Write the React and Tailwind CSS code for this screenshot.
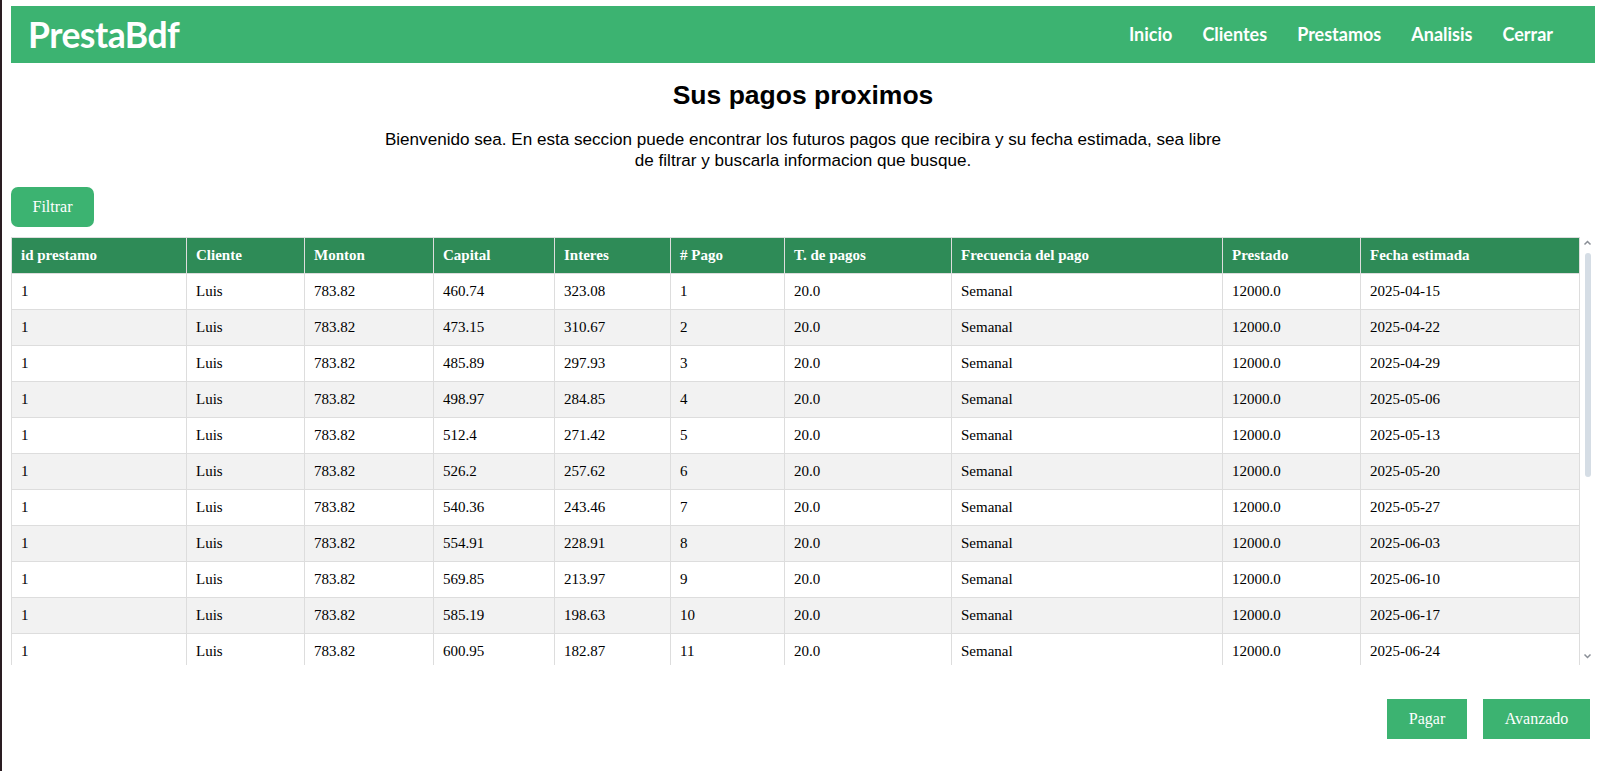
const rows = [
    ["460.74", "323.08", "2025-04-15"],
    ["473.15", "310.67", "2025-04-22"],
    ["485.89", "297.93", "2025-04-29"],
    ["498.97", "284.85", "2025-05-06"],
    ["512.4", "271.42", "2025-05-13"],
    ["526.2", "257.62", "2025-05-20"],
    ["540.36", "243.46", "2025-05-27"],
    ["554.91", "228.91", "2025-06-03"],
    ["569.85", "213.97", "2025-06-10"],
    ["585.19", "198.63", "2025-06-17"],
    ["600.95", "182.87", "2025-06-24"],
    ["617.13", "166.69", "2025-07-01"],
    ["633.74", "150.08", "2025-07-08"],
    ["650.81", "133.01", "2025-07-15"],
    ["668.33", "115.49", "2025-07-22"],
    ["686.32", "97.5", "2025-07-29"],
    ["704.8", "79.02", "2025-08-05"],
    ["723.77", "60.05", "2025-08-12"],
    ["743.26", "40.56", "2025-08-19"],
    ["763.27", "20.55", "2025-08-26"]
];

const columns = [
    { label: "id prestamo", w: "w-[175px]" },
    { label: "Cliente", w: "w-[118px]" },
    { label: "Monton", w: "w-[129px]" },
    { label: "Capital", w: "w-[121px]" },
    { label: "Interes", w: "w-[116px]" },
    { label: "# Pago", w: "w-[114px]" },
    { label: "T. de pagos", w: "w-[167px]" },
    { label: "Frecuencia del pago", w: "w-[271px]" },
    { label: "Prestado", w: "w-[138px]" },
    { label: "Fecha estimada", w: "" }
];

const navLinks = ["Inicio", "Clientes", "Prestamos", "Analisis", "Cerrar"];

const Chevron = ({ up }) => (
    <svg width="9" height="6" viewBox="0 0 9 6" className="text-[#8a8f96]">
        <polyline
            points={up ? "1.5,4.5 4.5,1.5 7.5,4.5" : "1.5,1.5 4.5,4.5 7.5,1.5"}
            fill="none"
            stroke="currentColor"
            strokeWidth="1.5"
        />
    </svg>
);

const App = () => {
    return (
        <div className="min-h-screen bg-white flex">
            <div className="w-[2px] bg-[#2a1d22]"></div>
            <div className="flex-1 pl-[9px] pr-[5px] pt-[6px]">
                {/* Navbar */}
                <nav className="h-[57px] bg-[#3cb371] flex items-center justify-between pl-[17px] pr-[42px] font-['Lato',sans-serif] text-white">
                    <h1 className="text-[35.5px] font-bold tracking-[-0.5px]">PrestaBdf</h1>
                    <ul className="flex items-center gap-[30px] text-[18px] font-bold">
                        {navLinks.map((link) => (
                            <li key={link}>
                                <a href="#">{link}</a>
                            </li>
                        ))}
                    </ul>
                </nav>

                {/* Intro */}
                <div className="text-center font-['Liberation_Sans',Arial,sans-serif] text-black">
                    <h2 className="mt-[17px] text-[26.5px] leading-[30px] font-bold">Sus pagos proximos</h2>
                    <p className="w-[850px] mx-auto mt-[19px] text-[17.1px] leading-[21px]">
                        Bienvenido sea. En esta seccion puede encontrar los futuros pagos que recibira y su fecha estimada, sea libre de filtrar y buscarla informacion que busque.
                    </p>
                </div>

                <button className="mt-[16px] w-[83px] h-[40px] rounded-[7px] bg-[#3cb371] text-white font-['Liberation_Serif',serif] text-[16px]">
                    Filtrar
                </button>

                {/* Table */}
                <div className="mt-[10px] h-[428px] flex">
                    <div className="flex-1 overflow-y-auto [scrollbar-width:none] font-['Liberation_Serif',serif] text-[15px] text-black">
                        <table className="w-full border-collapse table-fixed">
                            <thead>
                                <tr className="bg-[#2e8b57] text-white h-[36px]">
                                    {columns.map((c) => (
                                        <th key={c.label} className={`${c.w} border border-[#dddddd] px-[9px] text-left font-bold`}>
                                            {c.label}
                                        </th>
                                    ))}
                                </tr>
                            </thead>
                            <tbody>
                                {rows.map((r, i) => (
                                    <tr key={i} className={`h-[36px] ${i % 2 === 1 ? "bg-[#f2f2f2]" : "bg-white"}`}>
                                        <td className="border border-[#dddddd] px-[9px]">1</td>
                                        <td className="border border-[#dddddd] px-[9px]">Luis</td>
                                        <td className="border border-[#dddddd] px-[9px]">783.82</td>
                                        <td className="border border-[#dddddd] px-[9px]">{r[0]}</td>
                                        <td className="border border-[#dddddd] px-[9px]">{r[1]}</td>
                                        <td className="border border-[#dddddd] px-[9px]">{i + 1}</td>
                                        <td className="border border-[#dddddd] px-[9px]">20.0</td>
                                        <td className="border border-[#dddddd] px-[9px]">Semanal</td>
                                        <td className="border border-[#dddddd] px-[9px]">12000.0</td>
                                        <td className="border border-[#dddddd] px-[9px]">{r[2]}</td>
                                    </tr>
                                ))}
                            </tbody>
                        </table>
                    </div>
                    {/* scrollbar */}
                    <div className="w-[15px] flex flex-col items-center py-[3px]">
                        <Chevron up />
                        <div className="flex-1 w-full flex flex-col items-center pt-[7px] pb-[6px]">
                            <div className="w-[6px] h-[224px] rounded-full bg-[#d5dde5]"></div>
                        </div>
                        <div className="mb-[3px]">
                            <Chevron />
                        </div>
                    </div>
                </div>

                {/* Actions */}
                <div className="flex justify-end gap-[16px] mt-[34px] pr-[5px] font-['Liberation_Serif',serif] text-[16px]">
                    <button className="w-[80px] h-[40px] bg-[#3cb371] text-white">Pagar</button>
                    <button className="w-[107px] h-[40px] bg-[#3cb371] text-white">Avanzado</button>
                </div>
            </div>
        </div>
    );
};

export default App;
